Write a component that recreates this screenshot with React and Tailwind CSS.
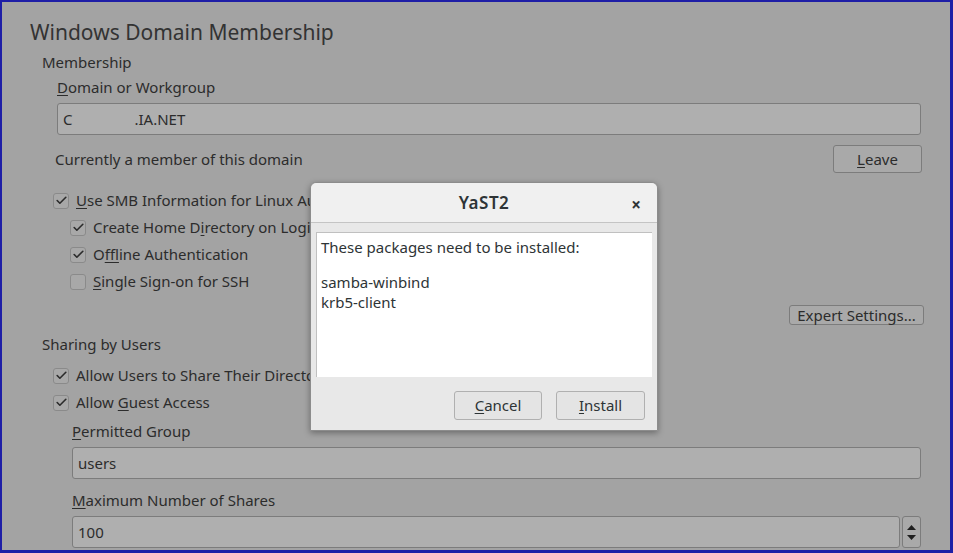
import { Check } from "lucide-react";

const U = ({ children }) => <span className="underline underline-offset-2 decoration-1">{children}</span>;

const CheckRow = ({ checked = true, indent = false, children }) => (
    <div className={`flex items-center h-[27px] whitespace-nowrap ${indent ? "pl-[68px]" : "pl-[51px]"}`}>
        <span className="w-[16px] h-[16px] rounded-[3px] border border-[#8a8a8a] bg-[#a8a8a8] flex items-center justify-center mr-[7px] shrink-0">
            {checked && <Check size={13} strokeWidth={3} className="text-[#2b2b2b]" />}
        </span>
        <span>{children}</span>
    </div>
);

const Field = ({ value, className = "" }) => (
    <div className={`h-[32px] rounded-[3px] border border-[#7c7c7c] bg-[#afafaf] flex items-center px-[5px] ${className}`}>
        {value}
    </div>
);

export default function App() {
    return (
        <div className="w-[953px] h-[553px] bg-[#1e1ea6] pl-[2px] pt-[2px] pr-[3px] pb-[3px] overflow-hidden" style={{ fontFamily: "'Noto Sans', sans-serif" }}>
            <div className="relative w-full h-full bg-[#a3a3a3] text-[#2c2c2c] text-[15px] overflow-hidden">
                <div className="pl-[28px] pr-[29px]">
                    <h1 className="text-[21px] text-[#333] pt-[16px] leading-[28px]">Windows Domain Membership</h1>
                    <div className="pl-[12px] mt-[6px] leading-[20px]">Membership</div>
                    <div className="pl-[27px] mt-[5px] leading-[20px]"><U>D</U>omain or Workgroup</div>
                    <Field className="ml-[27px] mt-[6px]" value={<span>C<span className="inline-block w-[62px]" />.IA.NET</span>} />
                    <div className="flex items-center justify-between pl-[25px] mt-[9px] h-[30px]">
                        <span>Currently a member of this domain</span>
                        <button className="w-[89px] h-[28px] rounded-[3px] border border-[#7c7c7c] bg-[#a9a9a9] mr-[-1px]"><U>L</U>eave</button>
                    </div>
                </div>
                <div className="mt-[13px]">
                    <CheckRow><U>U</U>se SMB Information for Linux Authentication</CheckRow>
                    <CheckRow indent>Create Home D<U>i</U>rectory on Login</CheckRow>
                    <CheckRow indent>O<U>f</U>fline Authentication</CheckRow>
                    <CheckRow indent checked={false}><U>S</U>ingle Sign-on for SSH</CheckRow>
                </div>
                <div className="flex justify-end pr-[26px] mt-[10px]">
                    <button className="w-[135px] h-[20px] rounded-[3px] border border-[#7c7c7c] bg-[#a9a9a9] leading-[17px]">Expert Settings...</button>
                </div>
                <div className="pl-[40px] mt-[9px] leading-[20px]">Sharing by Users</div>
                <div className="mt-[8px]">
                    <CheckRow>Allow Users to Share Their Directories</CheckRow>
                    <CheckRow>Allow <U>G</U>uest Access</CheckRow>
                </div>
                <div className="pl-[70px] pr-[29px]">
                    <div className="mt-[5px] leading-[20px]"><U>P</U>ermitted Group</div>
                    <Field className="mt-[6px]" value="users" />
                    <div className="mt-[11px] leading-[20px]"><U>M</U>aximum Number of Shares</div>
                    <div className="flex mt-[6px] gap-[2px]">
                        <Field className="flex-1" value="100" />
                        <div className="w-[19px] h-[32px] rounded-[3px] border border-[#7c7c7c] bg-[#a9a9a9] flex flex-col items-center justify-center gap-[5px]">
                            <svg width="9" height="5" viewBox="0 0 9 5"><path d="M0 5 L4.5 0 L9 5 Z" fill="#1f1f1f" /></svg>
                            <svg width="9" height="5" viewBox="0 0 9 5"><path d="M0 0 L4.5 5 L9 0 Z" fill="#1f1f1f" /></svg>
                        </div>
                    </div>
                </div>

                <div className="absolute left-[308px] top-[180px] w-[348px] h-[249px] rounded-t-[6px] border border-[#8c8c8c] bg-[#e8e8e8] shadow-[0_2px_6px_rgba(0,0,0,0.35)] flex flex-col text-[#2e3436] text-[15px]">
                    <div className="h-[40px] bg-[#f0f0f0] rounded-t-[6px] border-b border-[#c4c4c4] flex items-center relative">
                        <span className="flex-1 text-center font-semibold text-[17px] tracking-[0.5px]">YaST2</span>
                        <span className="absolute right-[16px] top-[9px] text-[17px] font-bold">×</span>
                    </div>
                    <div className="mx-[5px] mt-[9px] h-[145px] bg-white border-t border-l border-[#c0c0c0] px-[4px] pt-[4px] leading-[20px]">
                        <div>These packages need to be installed:</div>
                        <div className="mt-[15px]">samba-winbind</div>
                        <div>krb5-client</div>
                    </div>
                    <div className="flex justify-end gap-[14px] pr-[12px] mt-[14px]">
                        <button className="w-[88px] h-[29px] rounded-[3px] border border-[#b0b0b0] bg-[#e4e4e4]"><U>C</U>ancel</button>
                        <button className="w-[89px] h-[29px] rounded-[3px] border border-[#b0b0b0] bg-[#e4e4e4]"><U>I</U>nstall</button>
                    </div>
                </div>
            </div>
        </div>
    );
}
